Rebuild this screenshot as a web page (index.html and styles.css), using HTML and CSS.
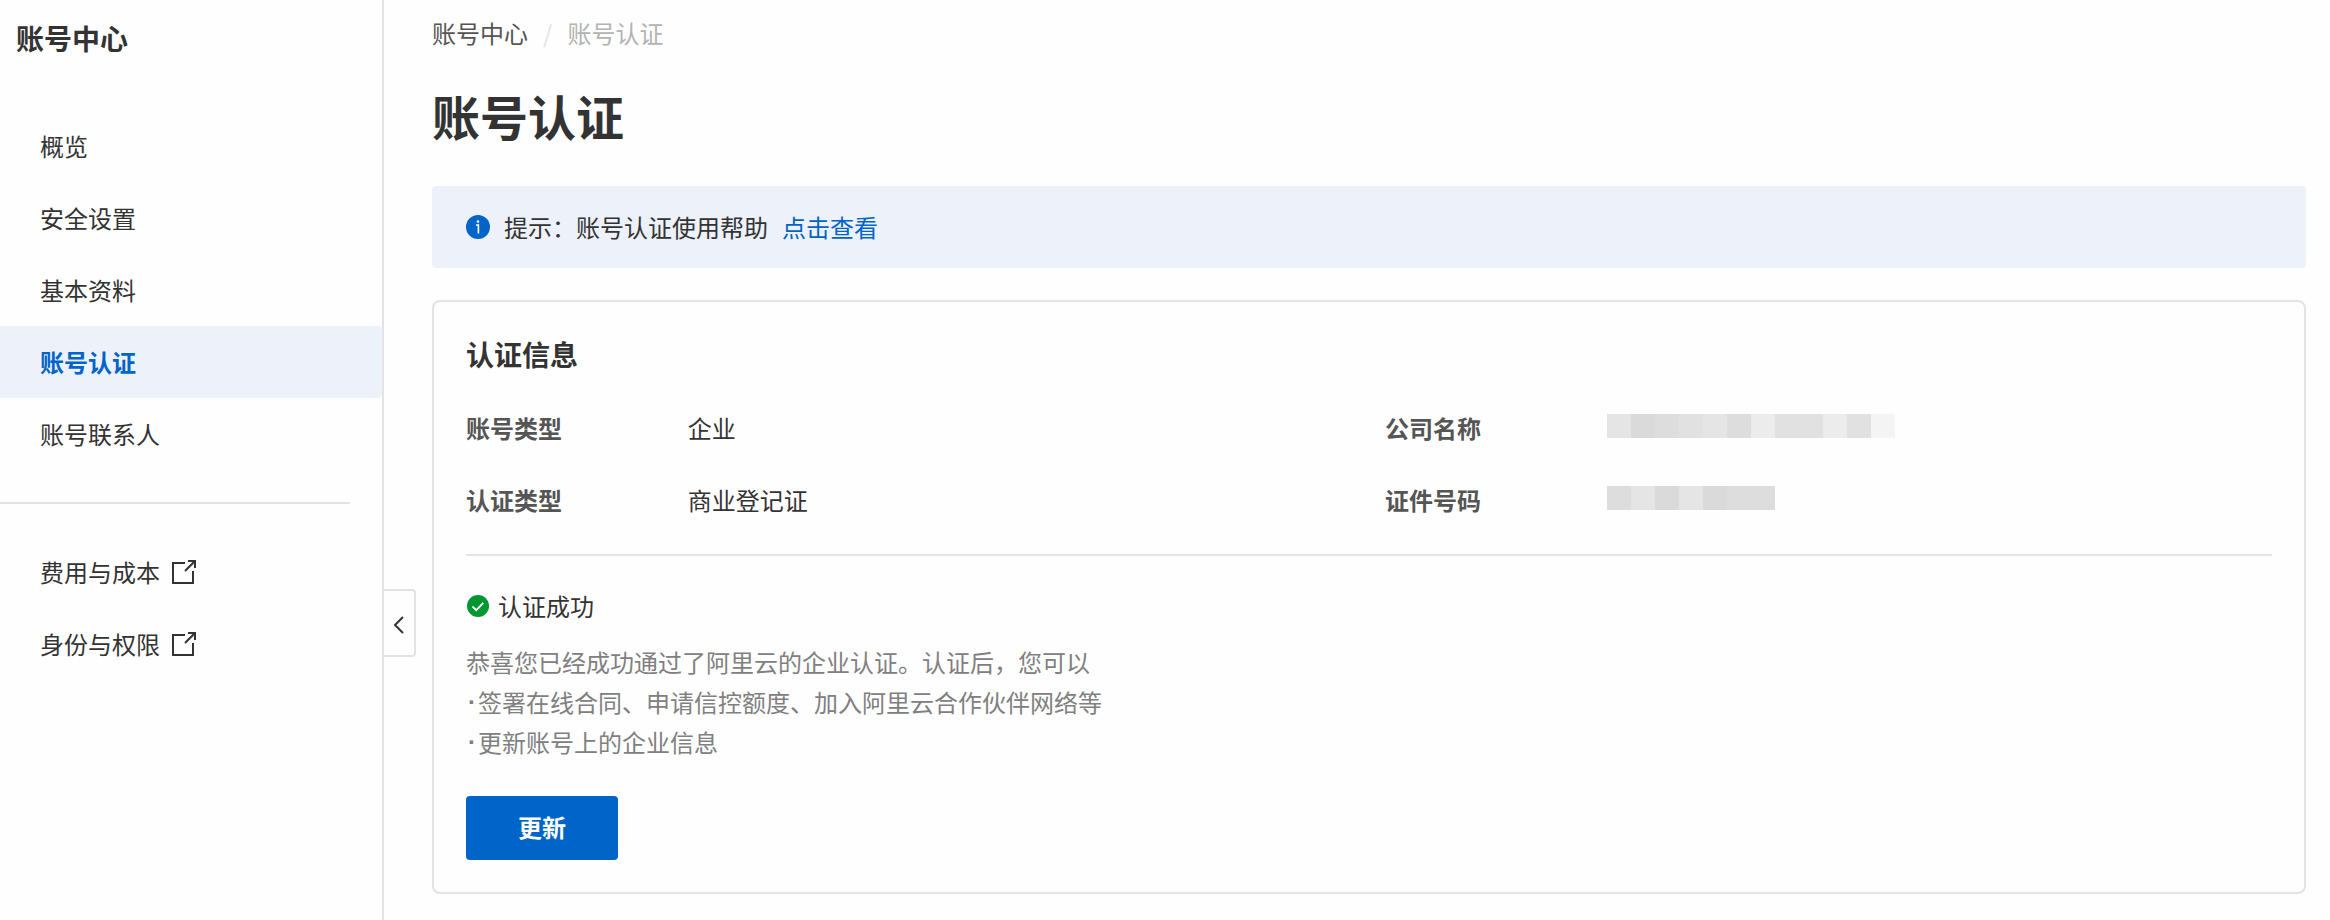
FILE: index.html
```
<!DOCTYPE html>
<html lang="zh-CN">
<head>
    <meta charset="UTF-8">
    <title>账号认证</title>
    <link rel="stylesheet" href="styles.css">
</head>
<body>
    <div class="layout">
        <aside class="sidebar">
            <div class="sidebar-title">账号中心</div>
            <nav>
                <ul class="menu">
                    <li><a href="#">概览</a></li>
                    <li><a href="#">安全设置</a></li>
                    <li><a href="#">基本资料</a></li>
                    <li><a href="#" class="active" aria-current="page">账号认证</a></li>
                    <li><a href="#">账号联系人</a></li>
                </ul>
                <hr class="menu-divider">
                <ul class="menu">
                    <li>
                        <a href="#">费用与成本
                            <svg class="icon-external" viewBox="0 0 26 26" fill="none" stroke="currentColor" stroke-width="2">
                                <path d="M15 4H3v20h20V12M18 2h7v7M25 2L15 12"/>
                            </svg>
                        </a>
                    </li>
                    <li>
                        <a href="#">身份与权限
                            <svg class="icon-external" viewBox="0 0 26 26" fill="none" stroke="currentColor" stroke-width="2">
                                <path d="M15 4H3v20h20V12M18 2h7v7M25 2L15 12"/>
                            </svg>
                        </a>
                    </li>
                </ul>
            </nav>
            <button class="collapse" aria-label="收起">
                <svg viewBox="0 0 12 18" fill="none" stroke="currentColor" stroke-width="2">
                    <path d="M10 1L2 9l8 8"/>
                </svg>
            </button>
        </aside>

        <main class="content">
            <nav class="breadcrumb">
                <a href="#">账号中心</a>
                <span class="separator">/</span>
                <span class="current">账号认证</span>
            </nav>
            <h1>账号认证</h1>

            <div class="notice">
                <svg class="icon-info" viewBox="0 0 24 24">
                    <circle cx="12" cy="12" r="12" fill="#0064c8"/>
                    <circle cx="12" cy="6.6" r="1.3" fill="#fff"/>
                    <path d="M10 10h2.4v8.6" fill="none" stroke="#fff" stroke-width="1.6"/>
                </svg>
                <span>提示：账号认证使用帮助</span>
                <a href="#">点击查看</a>
            </div>

            <section class="card">
                <h2>认证信息</h2>
                <dl class="info">
                    <div class="info-item">
                        <dt>账号类型</dt>
                        <dd>企业</dd>
                    </div>
                    <div class="info-item">
                        <dt>公司名称</dt>
                        <dd class="masked">
                            <i class="m2"></i><i class="m5"></i><i class="m4"></i><i class="m3"></i><i class="m2"></i><i class="m4"></i><i class="m1"></i><i class="m3"></i><i class="m3"></i><i class="m1"></i><i class="m3"></i><i class="m0"></i>
                        </dd>
                    </div>
                    <div class="info-item">
                        <dt>认证类型</dt>
                        <dd>商业登记证</dd>
                    </div>
                    <div class="info-item">
                        <dt>证件号码</dt>
                        <dd class="masked">
                            <i class="m4"></i><i class="m2"></i><i class="m5"></i><i class="m2"></i><i class="m5"></i><i class="m4"></i><i class="m4"></i>
                        </dd>
                    </div>
                </dl>

                <div class="status">
                    <svg class="icon-success" viewBox="0 0 24 24">
                        <circle cx="12" cy="12" r="11" fill="#009632"/>
                        <path d="M6.5 12.5l3.8 3.7 7-7.4" fill="none" stroke="#fff" stroke-width="1.8"/>
                    </svg>
                    <span>认证成功</span>
                </div>
                <div class="description">
                    <p>恭喜您已经成功通过了阿里云的企业认证。认证后，您可以</p>
                    <ul>
                        <li>签署在线合同、申请信控额度、加入阿里云合作伙伴网络等</li>
                        <li>更新账号上的企业信息</li>
                    </ul>
                </div>
                <button class="update">更新</button>
            </section>
        </main>
    </div>
</body>
</html>
```
FILE: styles.css
```
* {
    box-sizing: border-box;
}

body {
    margin: 0;
    font-family: "Noto Sans CJK SC", sans-serif;
    font-size: 24px;
    line-height: 32px;
    color: #333;
    background-color: #fefefe;
}

a {
    color: inherit;
    text-decoration: none;
}

ul, dl, dd, p {
    list-style: none;
    margin: 0;
    padding: 0;
}

.layout {
    display: flex;
    min-height: 100vh;
}

/* sidebar */
.sidebar {
    position: relative;
    flex: none;
    width: 384px;
    border-right: 2px solid #e3e3e3;
}

.sidebar-title {
    padding: 18px 16px 52px;
    font-size: 28px;
    line-height: 40px;
    font-weight: 700;
}

.menu a {
    display: flex;
    align-items: center;
    gap: 10px;
    height: 72px;
    padding: 0 40px;
    border-radius: 0 4px 4px 0;
}

.menu a:hover {
    color: #0064c8;
}

.menu .active {
    color: #0064c8;
    font-weight: 700;
    background-color: #edf1fa;
}

.menu-divider {
    width: 350px;
    height: 2px;
    margin: 32px 0;
    border: none;
    background-color: #e3e3e3;
}

.icon-external {
    width: 26px;
    height: 26px;
}

.collapse {
    position: absolute;
    left: 100%;
    bottom: 263px;
    display: flex;
    align-items: center;
    justify-content: center;
    width: 32px;
    height: 68px;
    margin-left: 2px;
    padding: 4px 0 0;
    border: 2px solid #e3e3e3;
    border-left: none;
    border-radius: 0 4px 4px 0;
    color: #333;
    background-color: #fefefe;
    cursor: pointer;
}

.collapse svg {
    width: 12px;
    height: 18px;
}

/* content */
.content {
    flex: 1;
    min-width: 0;
    padding: 17px 24px 24px 48px;
}

.breadcrumb {
    display: flex;
    gap: 15px;
    color: #555;
}

.separator {
    color: #e3e3e3;
}

.current {
    color: #b3b3b3;
}

h1 {
    margin: 34px 0 39px;
    font-size: 48px;
    line-height: 64px;
    font-weight: 700;
}

.notice {
    display: flex;
    align-items: center;
    padding: 25px 34px;
    border-radius: 4px;
    background-color: #edf1fa;
}

.notice a {
    margin-left: 14px;
    color: #0064c8;
}

.icon-info {
    width: 24px;
    height: 24px;
    margin-right: 14px;
}

.card {
    margin-top: 32px;
    padding: 32px;
    border: 2px solid #e3e3e3;
    border-radius: 8px;
}

h2 {
    margin: 0 0 18px;
    font-size: 28px;
    line-height: 40px;
    font-weight: 700;
}

.info {
    display: grid;
    grid-template-columns: 1fr 1fr;
    column-gap: 32px;
    padding-bottom: 18px;
    border-bottom: 2px solid #e3e3e3;
}

.info-item {
    display: grid;
    grid-template-columns: 1fr 3fr;
    align-items: center;
    height: 72px;
}

dt {
    color: #555;
    font-weight: 700;
}

.masked {
    display: flex;
    padding-bottom: 4px;
}

.masked i {
    width: 24px;
    height: 24px;
}

.m0 { background-color: #f4f4f4; }
.m1 { background-color: #ececec; }
.m2 { background-color: #e5e5e5; }
.m3 { background-color: #e1e1e1; }
.m4 { background-color: #dddddd; }
.m5 { background-color: #dadada; }

.status {
    display: flex;
    align-items: center;
    gap: 8px;
    margin-top: 34px;
}

.icon-success {
    width: 24px;
    height: 24px;
}

.description {
    margin: 20px 0 34px;
    line-height: 40px;
    color: #808080;
}

.description li {
    display: flex;
}

.description li::before {
    content: "·";
    width: 12px;
    font-family: "Liberation Sans", sans-serif;
    font-weight: 700;
    text-align: center;
}

.update {
    width: 152px;
    height: 64px;
    padding: 0 0 2px;
    border: none;
    border-radius: 4px;
    font: inherit;
    font-weight: 700;
    color: #fff;
    background-color: #0064c8;
    cursor: pointer;
}

.update:hover {
    background-color: #0057ad;
}
```
